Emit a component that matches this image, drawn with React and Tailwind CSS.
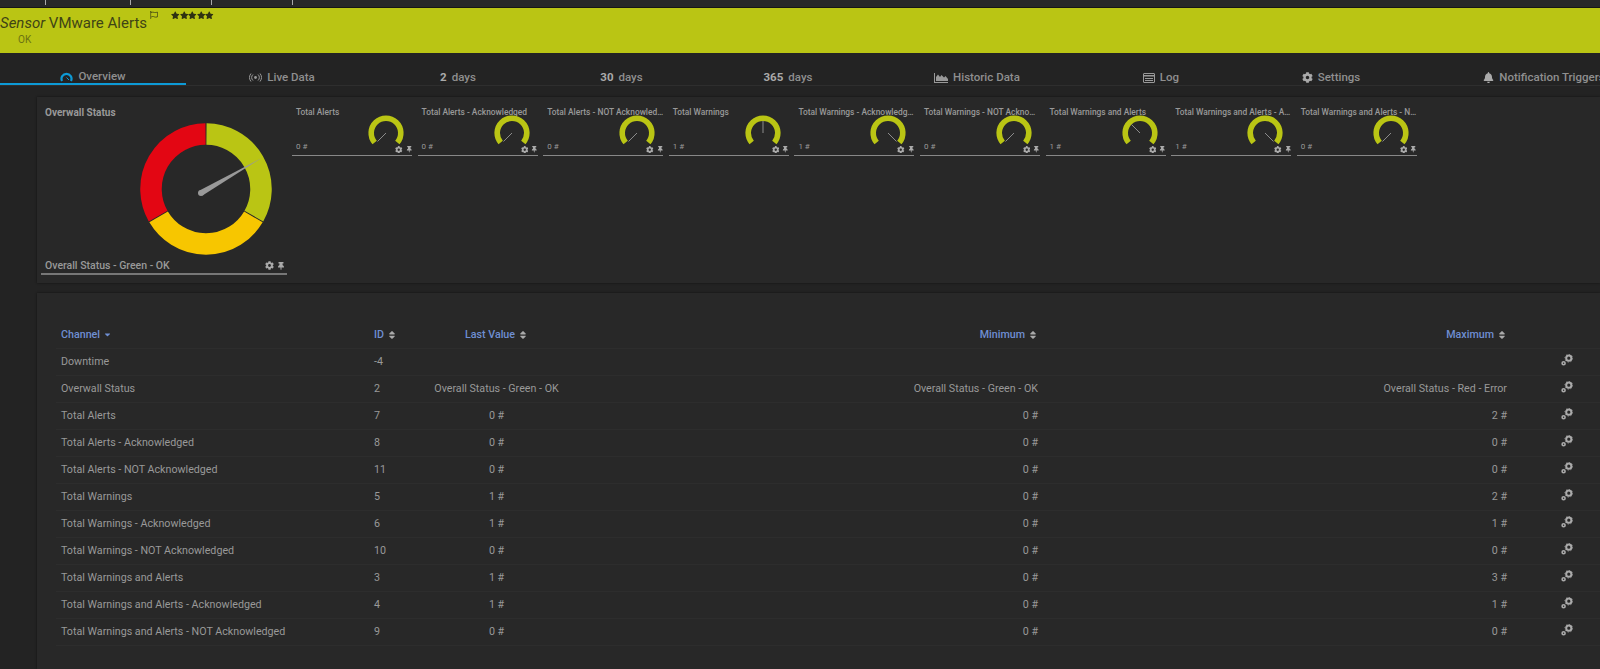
import React from 'react';
import { FaBell, FaCaretDown, FaCog, FaRegFlag, FaSort, FaStar, FaThumbtack } from 'react-icons/fa';

const tabs = [
    { key: 'overview', label: 'Overview', width: 'w-[186px]', active: true },
    { key: 'live', label: 'Live Data', width: 'w-[192px]' },
    { key: 'two', num: '2', label: 'days', width: 'w-[160px]' },
    { key: 'thirty', num: '30', label: 'days', width: 'w-[167px]' },
    { key: 'year', num: '365', label: 'days', width: 'w-[166px]' },
    { key: 'historic', label: 'Historic Data', width: 'w-[212px]' },
    { key: 'log', label: 'Log', width: 'w-[156px]' },
    { key: 'settings', label: 'Settings', width: 'w-[184px]' },
    { key: 'notify', label: 'Notification Triggers', width: 'w-[242px]' },
];

// needle angle in degrees clockwise from straight up
const widgets = [
    { title: 'Total Alerts', value: '0 #', angle: -135 },
    { title: 'Total Alerts - Acknowledged', value: '0 #', angle: -135 },
    { title: 'Total Alerts - NOT Acknowledged', value: '0 #', angle: -135 },
    { title: 'Total Warnings', value: '1 #', angle: 0 },
    { title: 'Total Warnings - Acknowledged', value: '1 #', angle: 135 },
    { title: 'Total Warnings - NOT Acknowledged', value: '0 #', angle: -135 },
    { title: 'Total Warnings and Alerts', value: '1 #', angle: -45 },
    { title: 'Total Warnings and Alerts - Acknowledged', value: '1 #', angle: 135 },
    { title: 'Total Warnings and Alerts - NOT Acknowledged', value: '0 #', angle: -135 },
];

const rows = [
    ['Downtime', '-4', '', '', ''],
    ['Overwall Status', '2', 'Overall Status - Green - OK', 'Overall Status - Green - OK', 'Overall Status - Red - Error'],
    ['Total Alerts', '7', '0 #', '0 #', '2 #'],
    ['Total Alerts - Acknowledged', '8', '0 #', '0 #', '0 #'],
    ['Total Alerts - NOT Acknowledged', '11', '0 #', '0 #', '0 #'],
    ['Total Warnings', '5', '1 #', '0 #', '2 #'],
    ['Total Warnings - Acknowledged', '6', '1 #', '0 #', '1 #'],
    ['Total Warnings - NOT Acknowledged', '10', '0 #', '0 #', '0 #'],
    ['Total Warnings and Alerts', '3', '1 #', '0 #', '3 #'],
    ['Total Warnings and Alerts - Acknowledged', '4', '1 #', '0 #', '1 #'],
    ['Total Warnings and Alerts - NOT Acknowledged', '9', '0 #', '0 #', '0 #'],
];

const polar = (cx, cy, r, deg) => {
    const a = (deg * Math.PI) / 180;
    return [cx + r * Math.sin(a), cy - r * Math.cos(a)];
};

const ringPath = (cx, cy, r, from, to) => {
    const [x1, y1] = polar(cx, cy, r, from);
    const [x2, y2] = polar(cx, cy, r, to);
    return `M${x1} ${y1}A${r} ${r} 0 ${to - from > 180 ? 1 : 0} 1 ${x2} ${y2}`;
};

const TabIcon = ({ name }) => {
    if (name === 'overview') {
        return (
            <svg width="13" height="11" viewBox="0 0 13 11" fill="none">
                <path d="M2 10A5 5 0 1 1 11 10" stroke="#0d9ad6" strokeWidth="2.2" />
                <path d="M6.5 6.5L9 9" stroke="#0d9ad6" strokeWidth="1" />
            </svg>
        );
    }
    if (name === 'live') {
        return (
            <svg width="13" height="9" viewBox="0 0 13 9" fill="none" stroke="#999" strokeWidth="1">
                <circle cx="6.5" cy="4.5" r="1.4" fill="#999" stroke="none" />
                <path d="M4 1.5a4 4 0 0 0 0 6M9 1.5a4 4 0 0 1 0 6M2 .5a6.5 6.5 0 0 0 0 8M11 .5a6.5 6.5 0 0 1 0 8" />
            </svg>
        );
    }
    if (name === 'historic') {
        return (
            <svg width="14" height="10" viewBox="0 0 14 10" fill="#999">
                <path d="M0 0h1v9h13v1H0z" />
                <path d="M2 8V4l2-2.5L6 4l1.5-2L10 4.5 11.5 3 14 6v2z" />
            </svg>
        );
    }
    if (name === 'log') {
        return (
            <svg width="12" height="10" viewBox="0 0 12 10" fill="none">
                <rect x=".5" y=".5" width="11" height="9" rx=".5" stroke="#999" />
                <path d="M1 2h10v1.5H1zM2 5h8v1H2zM2 7h8v1H2z" fill="#999" />
            </svg>
        );
    }
    if (name === 'settings') return <FaCog className="text-[11px] text-[#aaa]" />;
    if (name === 'notify') return <FaBell className="text-[11px] text-[#aaa]" />;
    return null;
};

const WidgetTools = ({ big }) => (
    <div className="flex items-center gap-[3px] text-[#aaa]">
        <FaCog className={big ? 'text-[9px]' : 'text-[7.5px]'} />
        <FaThumbtack className={big ? 'text-[8px]' : 'text-[6.5px]'} />
    </div>
);

const ChannelGears = () => (
    <svg width="12" height="12" viewBox="0 0 12 12" fill="none" stroke="#aaa">
        <circle cx="7.8" cy="4.2" r="2.6" strokeWidth="2" />
        <circle cx="7.8" cy="4.2" r="3.9" strokeWidth="0.8" strokeDasharray="1.2 1.8" />
        <circle cx="2.6" cy="9.2" r="1.5" strokeWidth="1.6" />
    </svg>
);

const SmallGauge = ({ angle }) => {
    const [tipX, tipY] = polar(18, 18, 12, angle);
    return (
        <svg width="36" height="36" viewBox="0 0 36 36" className="shrink-0">
            <path d={ringPath(18, 18, 14.8, -130, 130)} fill="none" stroke="#bac514" strokeWidth="5.6" />
            <line x1="18" y1="18" x2={tipX} y2={tipY} stroke="#8c8c8c" strokeWidth="1" />
        </svg>
    );
};

const BigGauge = () => {
    const base = 60;
    const [bx1, by1] = polar(61, 70, 3, base - 90);
    const [bx2, by2] = polar(61, 70, 3, base + 90);
    const [tx, ty] = polar(61, 70, 70, base);
    return (
        <svg width="132" height="132" viewBox="0 0 132 132" className="shrink-0">
            <path d={ringPath(66, 66, 55, 0.5, 119.5)} fill="none" stroke="#bac514" strokeWidth="21.5" />
            <path d={ringPath(66, 66, 55, 120.5, 239.5)} fill="none" stroke="#f7c600" strokeWidth="21.5" />
            <path d={ringPath(66, 66, 55, 240.5, 359.5)} fill="none" stroke="#e30613" strokeWidth="21.5" />
            <polygon points={`${bx1},${by1} ${tx},${ty} ${bx2},${by2}`} fill="#999" />
            <circle cx="61" cy="70" r="3" fill="#999" />
        </svg>
    );
};

const Header = ({ children, className }) => (
    <div className={`flex items-center gap-[3px] text-[10.7px] font-medium text-[#6f8fd3] ${className}`}>
        {children}
    </div>
);

const SortIcon = () => <FaSort className="text-[10px] text-[#aaa]" />;

const App = () => {
    return (
        <div className="flex h-[669px] w-[1600px] flex-col overflow-hidden bg-[#232323] font-['Roboto',sans-serif]">
            <div className="flex h-[8px] shrink-0 border-b border-[#161616] bg-[#282828]">
                <div className="h-[5px] w-[46px] border-r border-[#aaa]" />
                <div className="h-[5px] w-[85px] border-r border-[#aaa]" />
                <div className="h-[5px] w-[81px] border-r border-[#aaa]" />
                <div className="h-[5px] w-[81px] border-r border-[#aaa]" />
            </div>

            <div className="h-[45px] shrink-0 bg-[#bac514]">
                <div className="flex items-start pt-[6px]">
                    <h1 className="text-[15px] leading-[19px] text-[#3f4416]">
                        <i>Sensor</i> VMware Alerts
                    </h1>
                    <FaRegFlag className="ml-[3px] mt-[-3px] text-[8px] text-[#4a4f14]" />
                    <div className="ml-[13px] mt-[-3px] flex text-[#2f3212]">
                        {[0, 1, 2, 3, 4].map((i) => <FaStar key={i} className="text-[8.5px]" />)}
                    </div>
                </div>
                <div className="pl-[18px] text-[10px] leading-[13px] text-[#6b7213]">OK</div>
            </div>

            <div className="flex h-[33px] shrink-0 overflow-hidden border-b border-[#2e2e2e]">
                {tabs.map((tab) => (
                    <div
                        key={tab.key}
                        className={`flex shrink-0 items-center justify-center gap-[5px] pt-[17px] text-[11.5px] font-medium text-[#8f8f8f] ${tab.width} ${tab.active ? 'border-b-2 border-[#0d9ad6]' : ''}`}
                    >
                        <TabIcon name={tab.key} />
                        {tab.num && <span className="font-bold text-[#aaa]">{tab.num}</span>}
                        <span className="whitespace-nowrap">{tab.label}</span>
                    </div>
                ))}
            </div>

            <div className="ml-[37px] mt-[11px] flex h-[186px] shrink-0 gap-[5px] bg-[#282828] pl-[4px] pt-[9px] shadow-[0_0_2px_#111]">
                <div className="w-[246px] shrink-0">
                    <div className="h-[14px] pl-[4px] text-[10px] font-bold leading-[14px] text-[#999]">Overwall Status</div>
                    <div className="ml-[99px] mt-[3px]"><BigGauge /></div>
                    <div className="mt-[3px] flex h-[17px] items-center justify-between border-b-2 border-[#777] pl-[4px] pr-[2px] text-[10.5px] font-medium text-[#999]">
                        <span>Overall Status - Green - OK</span>
                        <WidgetTools big />
                    </div>
                </div>

                <div className="flex gap-[5.6px]">
                    {widgets.map((w) => (
                        <div key={w.title} className="w-[120px] shrink-0">
                            <div className="h-[11px] truncate pl-[4px] pt-[1px] text-[8.4px] font-medium leading-[10px] text-[#999]">{w.title}</div>
                            <div className="flex h-[39px] items-end border-b border-[#888] pb-[2px]">
                                <span className="w-[79px] pb-[1px] pl-[4px] text-[8px] leading-[10px] text-[#999]">{w.value}</span>
                                <div className="-mt-[2px] self-start"><SmallGauge angle={w.angle} /></div>
                                <div className="-ml-[9px]"><WidgetTools /></div>
                            </div>
                        </div>
                    ))}
                </div>
            </div>

            <div className="ml-[37px] mt-[10px] flex-1 bg-[#282828] pl-[19px] pt-[29px] shadow-[0_0_2px_#111]">
                <div className="grid h-[27px] grid-cols-[313px_60px_135px_479px_470px_87px] items-center border-b border-[#2d2d2d]">
                    <Header className="pl-[5px]">Channel <FaCaretDown className="text-[9px]" /></Header>
                    <Header className="pl-[5px]">ID <SortIcon /></Header>
                    <Header className="justify-center">Last Value <SortIcon /></Header>
                    <Header className="justify-end pr-[5px]">Minimum <SortIcon /></Header>
                    <Header className="justify-end pr-[6px]">Maximum <SortIcon /></Header>
                    <div />
                </div>
                {rows.map((row) => (
                    <div
                        key={row[0]}
                        className="grid h-[27px] grid-cols-[313px_60px_135px_479px_470px_87px] items-center border-b border-[#2d2d2d] text-[10.7px] text-[#999]"
                    >
                        <div className="pl-[5px]">{row[0]}</div>
                        <div className="pl-[5px]">{row[1]}</div>
                        <div className="whitespace-nowrap text-center">{row[2]}</div>
                        <div className="pr-[5px] text-right">{row[3]}</div>
                        <div className="pr-[6px] text-right">{row[4]}</div>
                        <div className="-mt-[4px] ml-[48px] h-[12px] w-[12px]"><ChannelGears /></div>
                    </div>
                ))}
            </div>
        </div>
    );
};

export default App;
